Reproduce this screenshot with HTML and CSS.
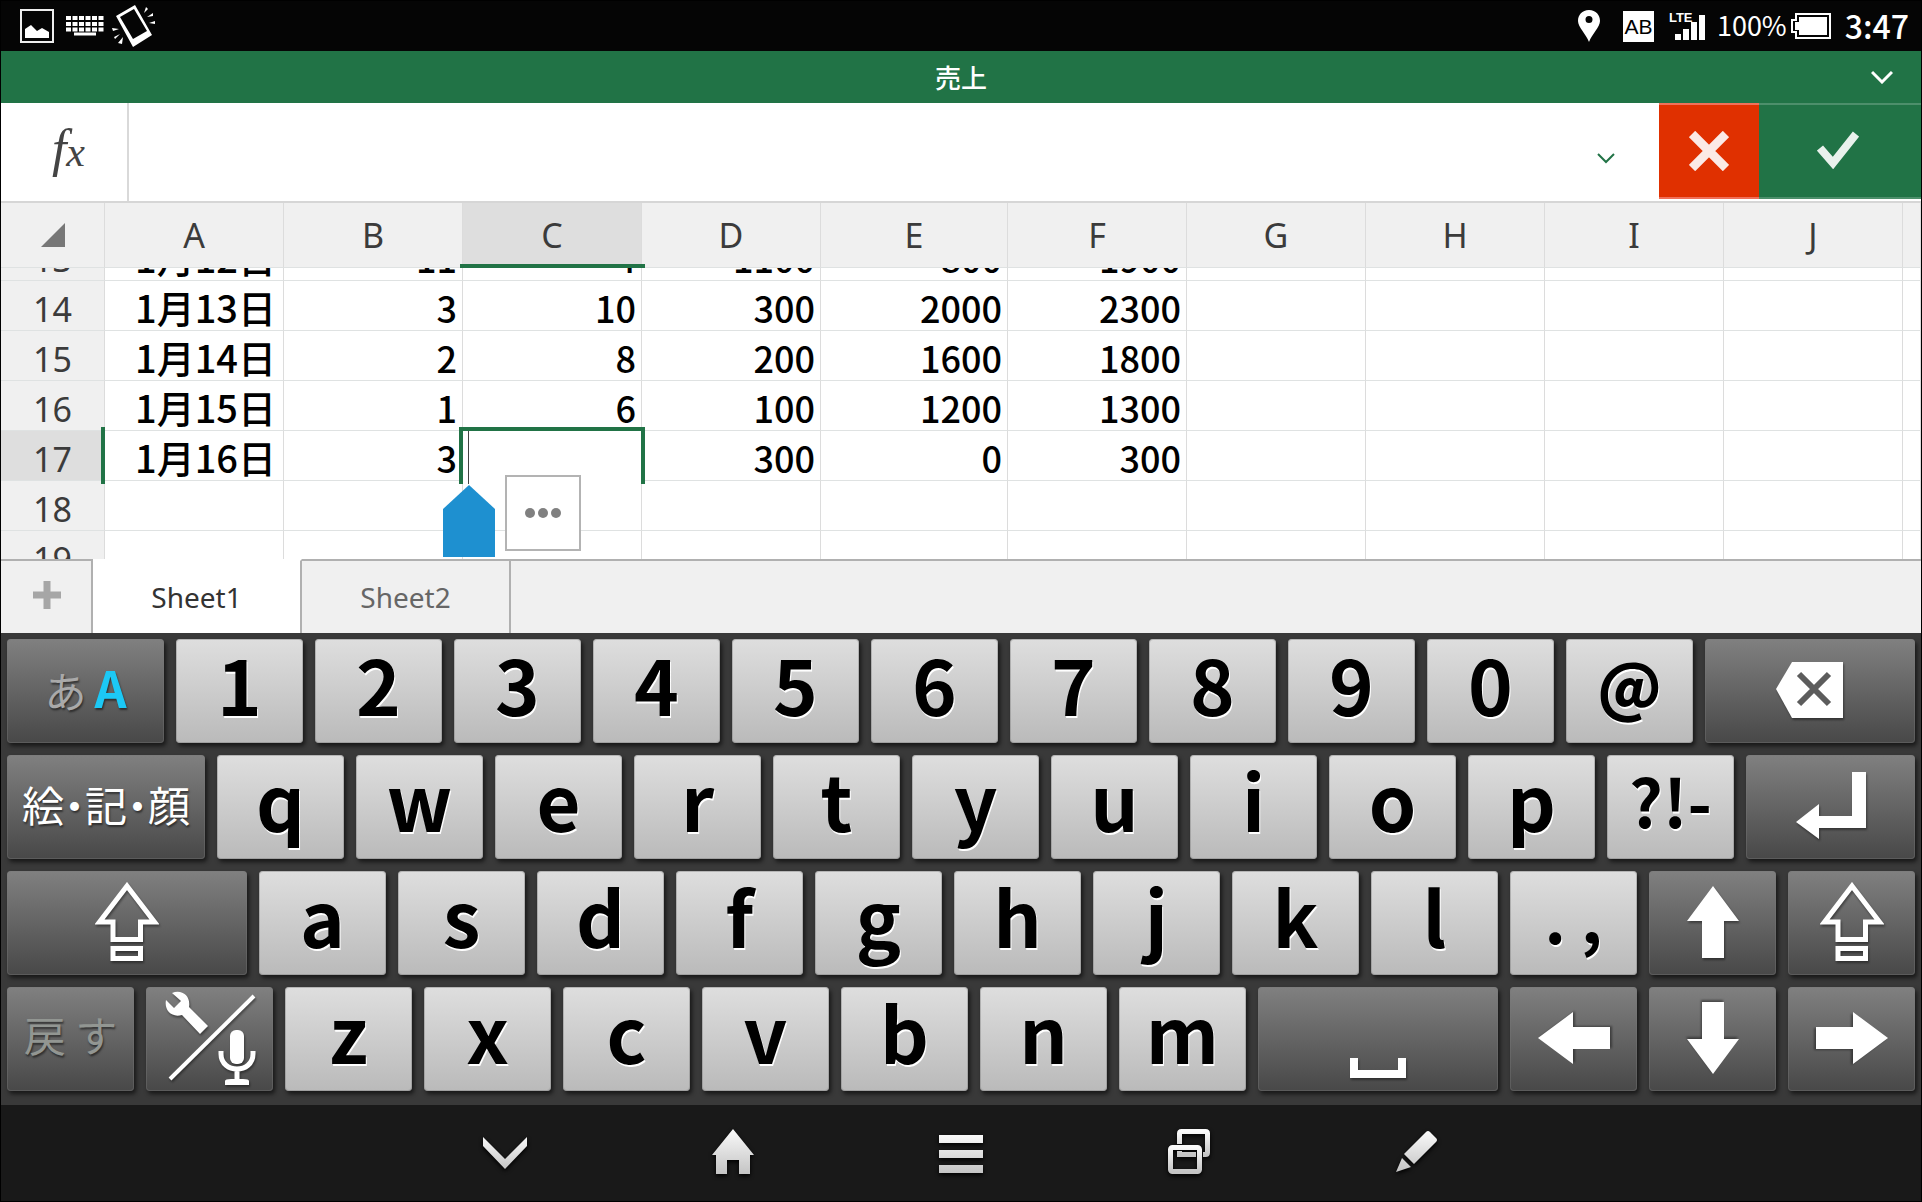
FILE: index.html
```
<!DOCTYPE html>
<html lang="ja">
<head>
    <meta charset="UTF-8">
    <meta name="viewport" content="width=device-width, initial-scale=1.0">
    <title>売上</title>
    <link rel="stylesheet" href="styles.css">
</head>
<body>
    <svg class="defs" width="0" height="0" aria-hidden="true">
        <linearGradient id="metal" x1="0" y1="0" x2="0" y2="1">
            <stop offset="0" stop-color="#fafafa"/>
            <stop offset="1" stop-color="#c4c4c4"/>
        </linearGradient>
        <symbol id="arrow" viewBox="0 0 52 72">
            <path d="M26 0L52 35H37V72H15V35H0Z" fill="#fff"/>
        </symbol>
        <symbol id="shift" viewBox="0 0 64 80">
            <path d="M32 4L59.500 40H45.500V57.500H18V40H4.500Z M18 66.500H45.500V76.500H18Z" fill="none" stroke="#fff" stroke-width="5"/>
        </symbol>
    </svg>

    <header class="status">
        <div class="status-side">
            <svg class="ic-picture" width="34" height="34" viewBox="0 0 34 34">
                <rect x="1" y="1" width="32" height="32" fill="none" stroke="#eee" stroke-width="2"/>
                <path d="M5 20l6-4 6 6 5-3 7 4v6H5z" fill="#fff"/>
            </svg>
            <svg class="ic-kbd" width="38" height="20" viewBox="0 0 38 20">
                <path d="M0 2H38M0 8H38M0 13.500H38" stroke="#fff" stroke-width="4" stroke-dasharray="5 1.500"/>
                <path d="M8 18H30" stroke="#fff" stroke-width="3"/>
            </svg>
            <svg class="ic-phone" width="44" height="42" viewBox="0 0 44 42">
                <path fill-rule="evenodd" fill="#fff" d="M4 11L23 0 40 30 21 42zM8 12L22 4 35 26 21 34z"/>
                <path fill="#fff" d="M32 8l2-6 2 2zM35 12l6-4 0 3zM37 18l6-2v3zM7 24l-7-1 1 3zM8 29l-6 3 1 2zM11 32l-5 6 4 1z"/>
            </svg>
        </div>
        <div class="status-side">
            <svg class="ic-pin" width="22" height="32" viewBox="0 0 22 32">
                <path fill-rule="evenodd" fill="#fff" d="M11 0C4 0 0 5 0 11c0 6 8 13 11 21 3-8 11-15 11-21C22 5 18 0 11 0zm0 6a3.500 3.500 0 1 1 0 7 3.500 3.500 0 1 1 0-7z"/>
            </svg>
            <span class="ime">AB</span>
            <span class="signal">
                <span class="lte">LTE</span>
                <svg width="36" height="26" viewBox="0 0 36 26">
                    <path d="M6 20h6v6H6zM14 15h6v11h-6zM22 8h6v18h-6zM30 1h6v25h-6z" fill="#fff"/>
                </svg>
            </span>
            <span class="percent">100%</span>
            <svg class="ic-battery" width="40" height="26" viewBox="0 0 40 26">
                <path d="M5 1H39V25H5V19H1V7H5Z" fill="none" stroke="#fff" stroke-width="2"/>
                <path d="M8 4H36V22H8V17H4V9H8Z" fill="#fff"/>
            </svg>
            <span class="clock">3:47</span>
        </div>
    </header>

    <div class="titlebar">
        <h1>売上</h1>
        <button class="title-toggle" aria-label="メニュー">
            <svg width="22" height="14" viewBox="0 0 22 14"><path d="M1 2L11 12 21 2" fill="none" stroke="#fff" stroke-width="3"/></svg>
        </button>
    </div>

    <div class="formula">
        <label class="fx" for="formulaInput">f<span>x</span></label>
        <input type="text" id="formulaInput">
        <button class="expand" aria-label="展開">
            <svg width="18" height="11" viewBox="0 0 18 11"><path d="M1 1L9 9 17 1" fill="none" stroke="#217346" stroke-width="2"/></svg>
        </button>
        <button class="cancel" aria-label="キャンセル">
            <svg width="40" height="40" viewBox="0 0 40 40"><path d="M3 3L37 37M37 3L3 37" stroke="#fbeae6" stroke-width="9"/></svg>
        </button>
        <button class="accept" aria-label="入力">
            <svg width="42" height="38" viewBox="0 0 42 38"><path d="M3 17L16 32 39 3" fill="none" stroke="#e9f1ec" stroke-width="8"/></svg>
        </button>
    </div>

    <div class="sheet" id="sheet">
        <table>
            <colgroup>
                <col class="rowhead"><col><col><col><col><col class="wide"><col><col><col><col><col><col class="rest">
            </colgroup>
            <thead>
                <tr>
                    <th><svg class="corner" width="24" height="24" viewBox="0 0 24 24"><path d="M24 0V24H0Z" fill="#777"/></svg></th>
                    <th>A</th><th>B</th><th class="current">C</th><th>D</th><th>E</th><th>F</th><th>G</th><th>H</th><th>I</th><th>J</th><th></th>
                </tr>
            </thead>
            <tbody>
                <tr><th>13</th><td class="date">1月12日</td><td>11</td><td>4</td><td>1100</td><td>800</td><td>1900</td><td></td><td></td><td></td><td></td><td></td></tr>
                <tr><th>14</th><td class="date">1月13日</td><td>3</td><td>10</td><td>300</td><td>2000</td><td>2300</td><td></td><td></td><td></td><td></td><td></td></tr>
                <tr><th>15</th><td class="date">1月14日</td><td>2</td><td>8</td><td>200</td><td>1600</td><td>1800</td><td></td><td></td><td></td><td></td><td></td></tr>
                <tr><th>16</th><td class="date">1月15日</td><td>1</td><td>6</td><td>100</td><td>1200</td><td>1300</td><td></td><td></td><td></td><td></td><td></td></tr>
                <tr>
                    <th class="current">17</th><td class="date">1月16日</td><td>3</td>
                    <td class="editing">
                        <div class="selection"></div>
                        <svg class="handle" width="52" height="72" viewBox="0 0 52 72"><path d="M26 0L52 24V72H0V24Z" fill="#1e90d0"/></svg>
                        <button class="more" aria-label="その他">
                            <svg width="38" height="12" viewBox="0 0 38 12" fill="#808080"><circle cx="6" cy="6" r="5"/><circle cx="19" cy="6" r="5"/><circle cx="32" cy="6" r="5"/></svg>
                        </button>
                    </td>
                    <td>300</td><td>0</td><td>300</td><td></td><td></td><td></td><td></td><td></td>
                </tr>
                <tr><th>18</th><td></td><td></td><td></td><td></td><td></td><td></td><td></td><td></td><td></td><td></td><td></td></tr>
                <tr><th>19</th><td></td><td></td><td></td><td></td><td></td><td></td><td></td><td></td><td></td><td></td><td></td></tr>
            </tbody>
        </table>
    </div>

    <div class="tabs">
        <button class="add" aria-label="シートの追加">
            <svg width="28" height="28" viewBox="0 0 28 28"><path d="M14 0V28M0 14H28" stroke="#a6a6a6" stroke-width="7"/></svg>
        </button>
        <button class="tab active">Sheet1</button>
        <button class="tab">Sheet2</button>
        <div class="tabs-rest"></div>
    </div>

    <div class="keyboard">
        <div class="keys">
            <button class="key dark lang"><span>あ</span><b>A</b></button>
            <button class="key">1</button>
            <button class="key">2</button>
            <button class="key">3</button>
            <button class="key">4</button>
            <button class="key">5</button>
            <button class="key">6</button>
            <button class="key">7</button>
            <button class="key">8</button>
            <button class="key">9</button>
            <button class="key">0</button>
            <button class="key at">@</button>
            <button class="key dark backspace" aria-label="削除">
                <svg width="68" height="56" viewBox="0 0 68 56">
                    <path d="M0 27L16 0H67V56H16Z" fill="#fff"/>
                    <path d="M23 12L53 42M53 12L23 42" stroke="#5c5c5c" stroke-width="6"/>
                </svg>
            </button>
        </div>
        <div class="keys">
            <button class="key dark emoji">絵・記・顔</button>
            <button class="key">q</button>
            <button class="key">w</button>
            <button class="key">e</button>
            <button class="key">r</button>
            <button class="key">t</button>
            <button class="key">y</button>
            <button class="key">u</button>
            <button class="key">i</button>
            <button class="key">o</button>
            <button class="key">p</button>
            <button class="key marks">?!-</button>
            <button class="key dark enter" aria-label="改行">
                <svg width="70" height="68" viewBox="0 0 70 68"><path d="M56 0H70V56H23V67L0 50 23 32V44H56Z" fill="#fff"/></svg>
            </button>
        </div>
        <div class="keys">
            <button class="key dark capslock" aria-label="シフト"><svg width="64" height="80"><use href="#shift"/></svg></button>
            <button class="key">a</button>
            <button class="key">s</button>
            <button class="key">d</button>
            <button class="key">f</button>
            <button class="key">g</button>
            <button class="key">h</button>
            <button class="key">j</button>
            <button class="key">k</button>
            <button class="key">l</button>
            <button class="key marks">. ,</button>
            <button class="key dark" aria-label="上"><svg width="52" height="72"><use href="#arrow"/></svg></button>
            <button class="key dark" aria-label="シフト"><svg width="64" height="80"><use href="#shift"/></svg></button>
        </div>
        <div class="keys">
            <button class="key dark undo" disabled>戻 す</button>
            <button class="key dark" aria-label="設定と音声入力">
                <svg width="96" height="96" viewBox="0 0 96 96">
                    <path d="M10 3L19 11 12 18 4 10C2 20 9 28 20 25L38 44 46 36 27 17C29 6 20-1 10 3Z" fill="#fff"/>
                    <path d="M8 89L92 6" stroke="#fff" stroke-width="4"/>
                    <rect x="68" y="40" width="14" height="34" rx="6" fill="#fff"/>
                    <path d="M59 61v3c0 20 32 20 32 0v-3M75 79v10" fill="none" stroke="#fff" stroke-width="5"/>
                    <path d="M63 95v-4q0-2 6-2h12q6 0 6 2v4z" fill="#fff"/>
                </svg>
            </button>
            <button class="key">z</button>
            <button class="key">x</button>
            <button class="key">c</button>
            <button class="key">v</button>
            <button class="key">b</button>
            <button class="key">n</button>
            <button class="key">m</button>
            <button class="key dark space" aria-label="スペース">
                <svg width="56" height="20" viewBox="0 0 56 20"><path d="M4 0V16H52V0" fill="none" stroke="#fff" stroke-width="8"/></svg>
            </button>
            <button class="key dark left" aria-label="左"><svg width="52" height="72"><use href="#arrow"/></svg></button>
            <button class="key dark down" aria-label="下"><svg width="52" height="72"><use href="#arrow"/></svg></button>
            <button class="key dark right" aria-label="右"><svg width="52" height="72"><use href="#arrow"/></svg></button>
        </div>
    </div>

    <nav class="navbar">
        <button aria-label="戻る">
            <svg width="44" height="46" viewBox="0 0 44 46"><path d="M0 8L22 30 44 8V17L22 40 0 17Z" fill="url(#metal)"/></svg>
        </button>
        <button aria-label="ホーム">
            <svg width="42" height="46" viewBox="0 0 42 46"><path d="M21 0L42 26H38V45H27V31H15V45H4V26H0Z" fill="url(#metal)"/></svg>
        </button>
        <button aria-label="メニュー">
            <svg width="44" height="46" viewBox="0 0 44 46"><path d="M0 6H44V14H0ZM0 21H44V29H0ZM0 36H44V44H0Z" fill="url(#metal)"/></svg>
        </button>
        <button aria-label="履歴">
            <svg width="42" height="46" viewBox="0 0 42 46">
                <g fill="none" stroke="url(#metal)">
                    <path d="M11.500 15V4.500q0-2 2-2H37.500q2 0 2 2V23.500q0 2-2 2H35M11.500 22v3.500H28" stroke-width="5"/>
                    <rect x="2.500" y="18.500" width="29" height="24" rx="2" stroke-width="5"/>
                </g>
            </svg>
        </button>
        <button aria-label="ペン">
            <svg width="42" height="46" viewBox="0 0 42 46">
                <path d="M30 3q2-2 4 0l6 6q2 2 0 4L18 35 8 25ZM6 29L15 38 0 43Z" fill="url(#metal)"/>
            </svg>
        </button>
    </nav>

    <script>
        // Keep the row being edited in view
        document.getElementById('sheet').scrollTop = 37;
    </script>
</body>
</html>
```
FILE: styles.css
```
* {
    box-sizing: border-box;
}
body {
    margin: 0;
    height: 100vh;
    display: flex;
    flex-direction: column;
    border: 1px solid #000;
    background: #fff;
    font-family: "Noto Sans CJK JP", sans-serif;
    overflow: hidden;
}
button {
    margin: 0;
    padding: 0;
    border: none;
    background: none;
    font-family: inherit;
    display: flex;
    justify-content: center;
    align-items: center;
    cursor: pointer;
}
svg {
    display: block;
    flex: none;
}
.defs {
    position: absolute;
}

/* status bar */
.status {
    height: 50px;
    flex: none;
    padding: 0 12px 0 19px;
    display: flex;
    justify-content: space-between;
    background: #050505;
    color: #fff;
}
.status-side {
    display: flex;
    align-items: center;
}
.ic-kbd {
    margin: 0 8px 0 12px;
}
.ime {
    width: 31px;
    height: 31px;
    margin: 0 15px 0 23px;
    background: #fff;
    color: #000;
    font: 21px/31px "Liberation Sans", sans-serif;
    text-align: center;
}
.signal {
    display: grid;
    margin-right: 12px;
}
.signal > * {
    grid-area: 1 / 1;
}
.signal svg {
    align-self: end;
    justify-self: end;
}
.lte {
    width: 36px;
    height: 28px;
    font: bold 13px/12px "Liberation Sans", sans-serif;
}
.percent {
    padding-bottom: 3px;
    font-size: 27px;
    line-height: 40px;
}
.ic-battery {
    margin: 0 14px 0 4px;
}
.clock {
    padding-bottom: 3px;
    font-size: 32px;
    font-weight: 500;
    line-height: 40px;
}

/* document title */
.titlebar {
    height: 52px;
    flex: none;
    display: grid;
    grid-template-columns: 78px 1fr 78px;
    background: #217346;
    color: #fff;
}
.titlebar h1 {
    grid-column: 2;
    margin: 0;
    font-size: 26px;
    font-weight: 500;
    line-height: 52px;
    text-align: center;
}

/* formula bar */
.formula {
    height: 100px;
    flex: none;
    display: flex;
    border-bottom: 2px solid #d6d6d6;
}
.fx {
    width: 128px;
    padding-right: 42px;
    border-right: 2px solid #d9d9d9;
    font: italic 52px/92px "Liberation Serif", serif;
    color: #444;
    text-align: right;
}
.fx span {
    font-size: 42px;
}
.formula input {
    flex: 1;
    min-width: 0;
    padding: 0 12px;
    border: none;
    outline: none;
    font-family: inherit;
    font-size: 36px;
}
.expand {
    width: 106px;
    padding-top: 12px;
}
.cancel,
.accept {
    height: 96px;
    border-top: 2px solid #f0705a;
    border-bottom: 2px solid #f0705a;
    background: #e03000;
}
.cancel {
    width: 100px;
}
.accept {
    width: 162px;
    padding-right: 4px;
    padding-bottom: 2px;
    border-color: #4d8f6b;
    background: #217346;
}

/* grid */
.sheet {
    flex: 1;
    min-height: 0;
    overflow: hidden;
}
table {
    width: 100%;
    table-layout: fixed;
    border-collapse: separate;
    border-spacing: 0;
}
col {
    width: 179px;
}
.rowhead {
    width: 104px;
}
.wide {
    width: 187px;
}
.rest {
    width: auto;
}
th,
td {
    height: 50px;
    padding: 0 4px;
    border-right: 1px solid #dcdcdc;
    border-bottom: 1px solid #dfe2e2;
    white-space: nowrap;
}
th {
    font-family: "Noto Sans", sans-serif;
    font-size: 34px;
    font-weight: 400;
    color: #3b3b3b;
    background: #f0f0f0;
    text-align: center;
}
thead th {
    height: 65px;
    line-height: 64px;
    position: sticky;
    top: 0;
    z-index: 2;
}
tbody th {
    padding-top: 8px;
    line-height: 41px;
}
.corner {
    margin: 0 auto;
}
td {
    padding: 3px 5px 0;
    font-size: 36px;
    font-weight: 500;
    line-height: 46px;
    text-align: right;
    color: #000;
}
.date {
    padding-right: 7px;
    font-size: 38px;
}
th.current {
    background: #dedede;
}
thead .current {
    z-index: 3;
}
thead .current::after {
    content: "";
    position: absolute;
    left: -3px;
    right: -4px;
    bottom: -1px;
    height: 4px;
    background: #217346;
}
tbody .current,
.editing {
    position: relative;
}
tbody .current::after {
    content: "";
    position: absolute;
    top: -4px;
    bottom: -4px;
    right: -1px;
    width: 4px;
    background: #217346;
}
.selection {
    position: absolute;
    top: -4px;
    left: -4px;
    right: -4px;
    bottom: -4px;
    border: 4px solid #217346;
    border-bottom: none;
    background: linear-gradient(#444, #444) 5px 0 / 1px 100% no-repeat #fff;
}
.handle {
    position: absolute;
    left: -20px;
    top: 54px;
    z-index: 1;
}
.more {
    position: absolute;
    left: 42px;
    top: 44px;
    width: 76px;
    height: 76px;
    border: 2px solid #b3b3b3;
    background: #fff;
    z-index: 1;
}

/* sheet tabs */
.tabs {
    height: 74px;
    flex: none;
    display: flex;
}
.tabs > * {
    border-top: 2px solid #b0b0b0;
    border-right: 2px solid #b0b0b0;
    background: #f0f0f0;
}
.add {
    width: 92px;
    padding: 0 0 4px 2px;
}
.tabs .tab {
    width: 209px;
    font-family: "Noto Sans", sans-serif;
    font-size: 28px;
    color: #666;
}
.tabs .active {
    background: #fff;
    border-top-color: #fff;
    color: #333;
}
.tabs .tabs-rest {
    flex: 1;
    border-right: none;
}

/* on-screen keyboard */
.keyboard {
    flex: none;
    padding: 6px 6px 14px;
    display: flex;
    flex-direction: column;
    gap: 12px;
    background: #393939;
}
.keys {
    display: flex;
    gap: 12px;
}
.key {
    flex: 127 1 0;
    min-width: 0;
    height: 104px;
    padding-bottom: 16px;
    border-radius: 4px;
    background: linear-gradient(#dedede, #bababa);
    box-shadow: inset 0 0 0 1px rgba(120, 120, 120, 0.4), 2px 3px 4px rgba(0, 0, 0, 0.6);
    color: #000;
    font-size: 76px;
    font-weight: 700;
    line-height: 1;
    text-shadow: 1px 2px 0 #fff;
}
.dark {
    padding-bottom: 3px;
    background: linear-gradient(#808080, #484848);
    color: #fff;
    font-size: 42px;
    font-weight: 400;
    text-shadow: 1px 2px 2px rgba(0, 0, 0, 0.5);
}
.dark svg {
    filter: drop-shadow(1px 2px 1px rgba(0, 0, 0, 0.4));
}
.lang {
    flex-grow: 157;
    gap: 8px;
    align-items: baseline;
    line-height: 94px;
    color: #a9a9a9;
}
.lang b {
    font-size: 50px;
    color: #1cc8f5;
}
.at {
    font-size: 62px;
    font-weight: 900;
}
.marks {
    font-size: 66px;
}
.backspace {
    flex-grow: 210;
}
.emoji {
    flex-grow: 198;
    padding-bottom: 6px;
    font-feature-settings: "halt";
    white-space: nowrap;
}
.enter {
    flex-grow: 169;
}
.capslock {
    flex-grow: 240;
}
.undo {
    padding-bottom: 10px;
    color: #929692;
}
.space {
    flex-grow: 240;
    align-items: flex-end;
    padding-bottom: 13px;
}
.left svg {
    transform: rotate(-90deg);
}
.down svg {
    transform: rotate(180deg);
}
.right svg {
    transform: rotate(90deg);
}

/* system navigation */
.navbar {
    height: 96px;
    flex: none;
    display: flex;
    justify-content: center;
    background: #191919;
}
.navbar button {
    width: 228px;
    padding-bottom: 2px;
}
.navbar svg {
    filter: drop-shadow(0 2px 2px #000);
}
```
